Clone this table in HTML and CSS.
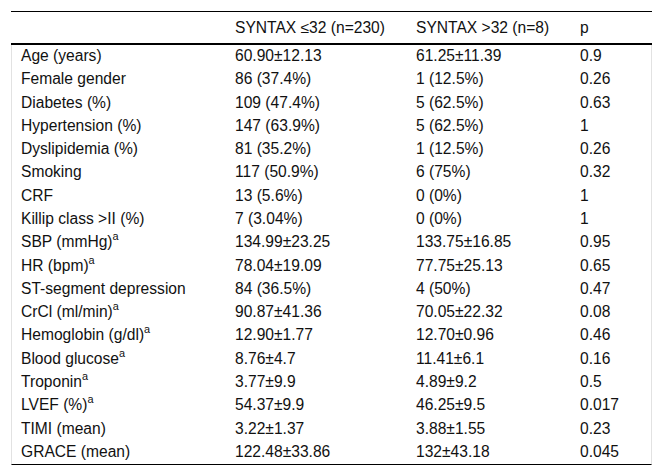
FILE: index.html
```html
<!DOCTYPE html>
<html>
<head>
<meta charset="utf-8">
<link rel="stylesheet" href="styles.css">
</head>
<body>
<table class="data">
  <thead>
    <tr>
      <th class="c1"></th>
      <th class="c2">SYNTAX ≤32 (n=230)</th>
      <th class="c3">SYNTAX &gt;32 (n=8)</th>
      <th class="c4">p</th>
    </tr>
  </thead>
  <tbody>
    <tr><td>Age (years)</td><td>60.90±12.13</td><td>61.25±11.39</td><td>0.9</td></tr>
    <tr><td>Female gender</td><td>86 (37.4%)</td><td>1 (12.5%)</td><td>0.26</td></tr>
    <tr><td>Diabetes (%)</td><td>109 (47.4%)</td><td>5 (62.5%)</td><td>0.63</td></tr>
    <tr><td>Hypertension (%)</td><td>147 (63.9%)</td><td>5 (62.5%)</td><td>1</td></tr>
    <tr><td>Dyslipidemia (%)</td><td>81 (35.2%)</td><td>1 (12.5%)</td><td>0.26</td></tr>
    <tr><td>Smoking</td><td>117 (50.9%)</td><td>6 (75%)</td><td>0.32</td></tr>
    <tr><td>CRF</td><td>13 (5.6%)</td><td>0 (0%)</td><td>1</td></tr>
    <tr><td>Killip class &gt;II (%)</td><td>7 (3.04%)</td><td>0 (0%)</td><td>1</td></tr>
    <tr><td>SBP (mmHg)<sup>a</sup></td><td>134.99±23.25</td><td>133.75±16.85</td><td>0.95</td></tr>
    <tr><td>HR (bpm)<sup>a</sup></td><td>78.04±19.09</td><td>77.75±25.13</td><td>0.65</td></tr>
    <tr><td>ST-segment depression</td><td>84 (36.5%)</td><td>4 (50%)</td><td>0.47</td></tr>
    <tr><td>CrCl (ml/min)<sup>a</sup></td><td>90.87±41.36</td><td>70.05±22.32</td><td>0.08</td></tr>
    <tr><td>Hemoglobin (g/dl)<sup>a</sup></td><td>12.90±1.77</td><td>12.70±0.96</td><td>0.46</td></tr>
    <tr><td>Blood glucose<sup>a</sup></td><td>8.76±4.7</td><td>11.41±6.1</td><td>0.16</td></tr>
    <tr><td>Troponin<sup>a</sup></td><td>3.77±9.9</td><td>4.89±9.2</td><td>0.5</td></tr>
    <tr><td>LVEF (%)<sup>a</sup></td><td>54.37±9.9</td><td>46.25±9.5</td><td>0.017</td></tr>
    <tr><td>TIMI (mean)</td><td>3.22±1.37</td><td>3.88±1.55</td><td>0.23</td></tr>
    <tr><td>GRACE (mean)</td><td>122.48±33.86</td><td>132±43.18</td><td>0.045</td></tr>
  </tbody>
</table>
</body>
</html>
```
FILE: styles.css
```css
html, body {
  margin: 0;
  padding: 0;
  background: #fff;
}

body {
  padding: 11px 0 0 11px;
  font-family: "Liberation Sans", Arial, sans-serif;
  font-size: 15.6px;
  color: #111;
}

.data {
  width: 641px;
  table-layout: fixed;
  border-collapse: separate;
  border-spacing: 0;
}

.data th {
  box-sizing: border-box;
  font-weight: normal;
  text-align: left;
  line-height: 19px;
  padding: 6px 9px 6px 9px;
  border-top: 1px solid #000;
  border-bottom: 2px solid #000;
  white-space: nowrap;
}

.data .c1 { width: 215px; }
.data .c2 { width: 181px; }
.data .c3 { width: 164px; }
.data .c4 { width: 81px; }

.data td {
  text-align: left;
  line-height: 19.28px;
  padding: 1px 9px 3px 9px;
  white-space: nowrap;
}

.data td:first-child {
  border-left: 1px solid #e2e2e2;
}

.data td:last-child {
  border-right: 1px solid #e2e2e2;
}

.data tbody tr:last-child td {
  border-bottom: 1px solid #000;
}

.data sup {
  font-size: 0.7em;
  line-height: 0;
  vertical-align: 0.62em;
}
```
